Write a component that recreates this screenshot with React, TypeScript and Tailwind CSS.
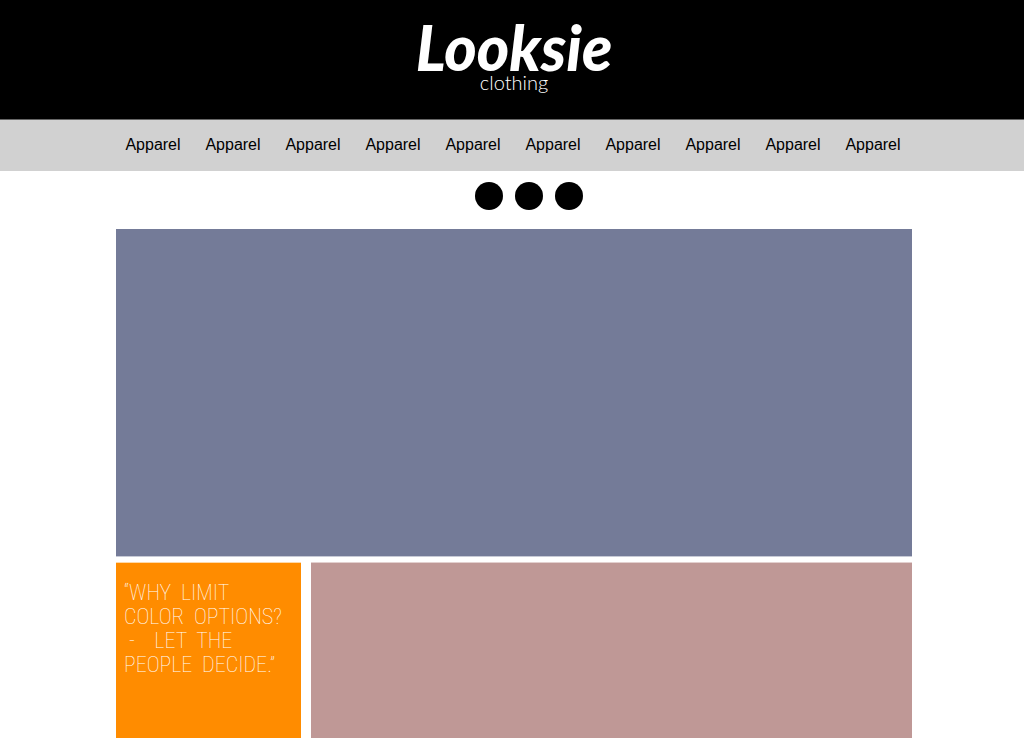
const navItems = Array.from({ length: 10 }, (_, i) => ({ id: i, label: "Apparel" }));
const slides = [1, 2, 3];

export default function App() {
  return (
    <div className="flex min-h-screen flex-col bg-white font-['Liberation_Sans',Arial,sans-serif] text-black">
      <header className="flex h-[119px] flex-col items-center bg-black pt-5 pl-1 text-white">
        <h1 className="flex flex-col items-center font-['Lato',sans-serif]">
          <span className="text-[62px] leading-[54px] font-black italic">Looksie</span>
          <span className="text-[20px] leading-4 font-light">clothing</span>
        </h1>
      </header>

      <nav aria-label="Main" className="border-t border-[#666666] bg-[#d1d1d1]">
        <ul className="mx-auto flex h-[51px] max-w-[802px] items-center pb-[2px] pl-[2px]">
          {navItems.map((item) => (
            <li key={item.id} className="flex-1 text-center">
              <a href="#apparel" className="text-base hover:underline">
                {item.label}
              </a>
            </li>
          ))}
        </ul>
      </nav>

      <main className="mx-auto flex w-full max-w-[800px] flex-1 flex-col pl-1">
        <div className="flex h-[58px] justify-center gap-3 pt-[11px] pl-[30px]">
          {slides.map((n) => (
            <button key={n} type="button" aria-label={`Slide ${n}`} className="size-7 rounded-full bg-black" />
          ))}
        </div>

        <section aria-label="Featured" className="h-[328px] border-b border-[#c7cad6] bg-[#747b98]" />

        <div className="mt-[5px] flex min-h-44 flex-1 gap-[10px]">
          <blockquote className="w-[185px] shrink-0 border-t border-[#ffd9a8] bg-[#ff8c00] px-2 pt-[18px] font-['Roboto_Condensed','Liberation_Sans_Narrow','Roboto',sans-serif] text-[22px] leading-6 font-thin whitespace-pre text-white uppercase">
            {"“Why  limit\ncolor  options?\n -    let  the\npeople  decide.”"}
          </blockquote>
          <section aria-label="Collection" className="flex-1 border-t border-[#e3d0cf] bg-[#bf9896]" />
        </div>
      </main>
    </div>
  );
}
